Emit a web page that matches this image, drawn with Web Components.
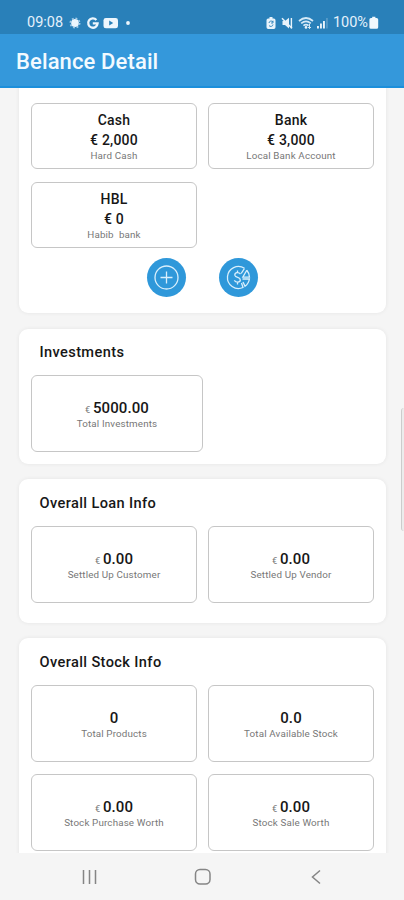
<!DOCTYPE html>
<html lang="en">
<head>
<meta charset="utf-8">
<title>Belance Detail</title>
<style>
html,body{margin:0;height:900px;overflow:hidden}
body{font-family:Roboto,"Liberation Sans",sans-serif;background:#f5f5f5;color:#171717}
</style>
</head>
<body>
<balance-app></balance-app>
<script>
function define(name, html){
  const t=document.createElement('template');
  t.innerHTML=html;
  customElements.define(name,class extends HTMLElement{
    constructor(){super();this.attachShadow({mode:'open'}).append(t.content.cloneNode(true));}
  });
}

define('status-bar',`<style>
:host{display:flex;flex:none;box-sizing:border-box;height:34px;padding:12px 25px 0 27px;background:#2980b9;color:#e4f1fb;justify-content:space-between;font-size:14.5px;line-height:22px}
div{display:flex;align-items:center}
svg{display:block;flex:none}
</style>
<div><span>09:08</span>
<svg width="72" height="22" viewBox="0 0 72 22" fill="#edf6fd">
<circle cx="12" cy="11" r="3.9"/><circle cx="12" cy="11" r="4.6" fill="none" stroke="#a5cde9" stroke-width="1.8" stroke-dasharray="1.8 1.8"/>
<path d="M33.4 7.9A4.7 4.7 0 1 0 34.6 11.4H29.8" fill="none" stroke="#edf6fd" stroke-width="2.3"/>
<rect x="40.5" y="6" width="14.5" height="10.3" rx="2.4"/><path d="M46.2 8.6v5l4-2.5z" fill="#2980b9"/>
<circle cx="65" cy="11" r="1.9"/></svg></div>
<div><svg width="68" height="22" viewBox="0 0 68 22" fill="#e8f3fb">
<path d="M3.2 6.5h1.3V5h3v1.5h1.3q1.7 0 1.7 1.7v7q0 1.7-1.7 1.7H3.2q-1.7 0-1.7-1.7v-7q0-1.7 1.7-1.7z"/><path d="M4 11a2.2 2.2 0 0 1 4-1M8 12.5a2.2 2.2 0 0 1-4 1M8 8.7V11H6" fill="none" stroke="#2980b9" stroke-width=".9"/>
<path d="M17.5 9h2.500l4-3.300v10.800L20 13h-2.500z"/><path d="M17 6.200 27 16.200" stroke="#e8f3fb" stroke-width="1.500"/><path d="M26.400 6v10.400" stroke="#e8f3fb" stroke-width="1.400"/>
<g fill="none" stroke="#d5e9f7" stroke-width="1.700"><path d="M34 9q7-6 14 0M36.200 11.400q4.800-4 9.600 0M38.400 13.600q2.600-2 5.200 0"/></g><circle cx="41" cy="15.400" r="1.300"/><path d="M44.500 12v4.500m-1.500-1.500 1.500 1.500 1.500-1.500" stroke="#e8f3fb" stroke-width=".9" fill="none"/>
<path d="M52 14h1.900v2.400H52zM55 11.600h1.900v4.800H55zM58 9h1.900v7.400H58z"/><path d="M61.200 6h1.500v10.400h-1.500z" fill="#5f9fcb"/></svg>
<span>100%</span>
<svg width="11" height="22" viewBox="0 0 11 22" fill="#f1f8fd"><path d="M3 6h1.200V4.800h3.200V6h1.200q1.600 0 1.600 1.600v7.600q0 1.600-1.600 1.600H3q-1.600 0-1.600-1.600V7.600Q1.400 6 3 6z"/></svg></div>`);

define('title-bar',`<style>
:host{display:flex;flex:none;box-sizing:border-box;height:54px;padding:3px 16px 0;align-items:center;background:#3498db;border-bottom:2px solid #1c8fdb;color:#f3faff;font-size:22px;font-weight:500;letter-spacing:.12px}
</style><slot></slot>`);

define('info-card',`<style>
:host{display:block;box-sizing:border-box;margin:0 18px 0 19px;padding:0 12px;background:#fff;border-radius:9px;box-shadow:0 0 4px rgba(0,0,0,.07)}
.h{box-sizing:border-box;font-size:14.600px;font-weight:500;line-height:20px;padding:14px 8.500px 0;height:47px;letter-spacing:.38px}
.g{display:grid;grid-template-columns:166px 166px;gap:12px 11px}
:host([plain]) .h{display:none}
:host([plain]) .g{row-gap:13px}
:host([wide]) .h{height:46px;padding-top:13px}
:host([wide]) .g{grid-template-columns:172px}
</style><div class="h"><slot name="heading"></slot></div><div class="g"><slot></slot></div><slot name="actions"></slot>`);

define('account-tile',`<style>
:host{display:block;box-sizing:border-box;height:66px;border:1px solid #c6c6c6;border-radius:6px;text-align:center;padding-top:7px;white-space:pre}
div{font-size:14px;font-weight:500;line-height:19.500px;letter-spacing:.2px}
.s{font-size:9.800px;font-weight:400;line-height:12px;color:#777;letter-spacing:.15px}
</style><div><slot name="name"></slot></div><div><slot name="amount"></slot></div><div class="s"><slot></slot></div>`);

define('stat-tile',`<style>
:host{display:block;box-sizing:border-box;height:77px;border:1px solid #c6c6c6;border-radius:6px;text-align:center;padding-top:23px}
.v{font-size:15px;font-weight:500;line-height:18px;letter-spacing:.1px}
.v ::slotted(small){font-size:9.500px;font-weight:400;line-height:0;color:#777}
.s{font-size:9.800px;line-height:12px;margin-top:1px;color:#777;letter-spacing:.15px}
</style><div class="v"><slot name="unit"></slot><slot name="value"></slot></div><div class="s"><slot></slot></div>`);

define('round-button',`<style>
:host{display:grid;place-items:center;width:39px;height:39px;border-radius:50%;background:#2f98da;color:#d9effc}
</style><slot></slot>`);

define('nav-bar',`<style>
:host{display:flex;flex:none;height:47px;background:#f5f5f5;justify-content:space-between;align-items:center;padding:0 79px 0 81px}
svg{fill:none;stroke:#858585;stroke-width:1.500}
</style>
<svg width="17" height="18" viewBox="0 0 17 18"><path d="M2.500 2v14M8.500 2v14M14.500 2v14"/></svg>
<svg width="20" height="20" viewBox="0 0 20 20"><rect x="2.500" y="2.500" width="14.500" height="14.500" rx="4.500"/></svg>
<svg width="17" height="18" viewBox="0 0 17 18"><path d="M12 2.500 4.500 9l7.500 6.500"/></svg>`);

define('balance-app',`<style>
:host{display:flex;flex-direction:column;height:900px;position:relative}
main{flex:1;min-height:0;overflow:hidden;display:flex;flex-direction:column}
info-card{flex:none;margin-bottom:15px}
.first{height:235px;margin-top:-10px;padding-top:25px;margin-bottom:16px}
.acts{display:flex;gap:33px;padding:9.500px 0 0 116px}
.edge{position:absolute;right:0;top:408px;width:2px;height:123px;background:#ececec;border-left:1px solid #ccc;border-radius:4px 0 0 4px}
svg{display:block;fill:none;stroke:#d9effc;stroke-width:1.300}
</style>
<status-bar></status-bar><title-bar>Belance Detail</title-bar>
<main>
<info-card plain class="first">
<account-tile><span slot="name">Cash</span><span slot="amount">€ 2,000</span>Hard Cash</account-tile>
<account-tile><span slot="name">Bank</span><span slot="amount">€ 3,000</span>Local Bank Account</account-tile>
<account-tile><span slot="name">HBL</span><span slot="amount">€ 0</span>Habib  bank</account-tile>
<div slot="actions" class="acts">
<round-button><svg width="27" height="27" viewBox="0 0 27 27"><circle cx="13.500" cy="13.500" r="11.500"/><path d="M13.500 7.500v12M7.500 13.500h12"/></svg></round-button>
<round-button><svg width="27" height="27" viewBox="0 0 27 27"><path d="M19.500 4.300A11 11 0 1 0 18 23.500L16.500 19M19.500 4.300l-3.300 5.200M21.800 6.200A11 11 0 0 1 24.500 13.200H17.800L21.800 6.200M17.500 15h6.900a11 11 0 0 1-4.400 7.300l-2-4.300"/><path d="M15.500 10q-1.500-1.800-3.800-1.300-2.200.6-1.800 2.700.3 1.300 2.800 2 2.600.8 2.600 2.600 0 2-2.600 2.200-2.200 0-3.400-1.800M12.500 6.500v2.200M12.500 18.200v2.200"/></svg></round-button>
</div></info-card>
<info-card wide style="height:135px"><span slot="heading">Investments</span>
<stat-tile><small slot="unit">€ </small><span slot="value">5000.00</span>Total Investments</stat-tile></info-card>
<info-card style="height:144px"><span slot="heading">Overall Loan Info</span>
<stat-tile><small slot="unit">€ </small><span slot="value">0.00</span>Settled Up Customer</stat-tile>
<stat-tile><small slot="unit">€ </small><span slot="value">0.00</span>Settled Up Vendor</stat-tile></info-card>
<info-card style="height:250px"><span slot="heading">Overall Stock Info</span>
<stat-tile><span slot="value">0</span>Total Products</stat-tile>
<stat-tile><span slot="value">0.0</span>Total Available Stock</stat-tile>
<stat-tile><small slot="unit">€ </small><span slot="value">0.00</span>Stock Purchase Worth</stat-tile>
<stat-tile><small slot="unit">€ </small><span slot="value">0.00</span>Stock Sale Worth</stat-tile></info-card>
</main>
<nav-bar></nav-bar><div class="edge"></div>`);
</script>
</body>
</html>
